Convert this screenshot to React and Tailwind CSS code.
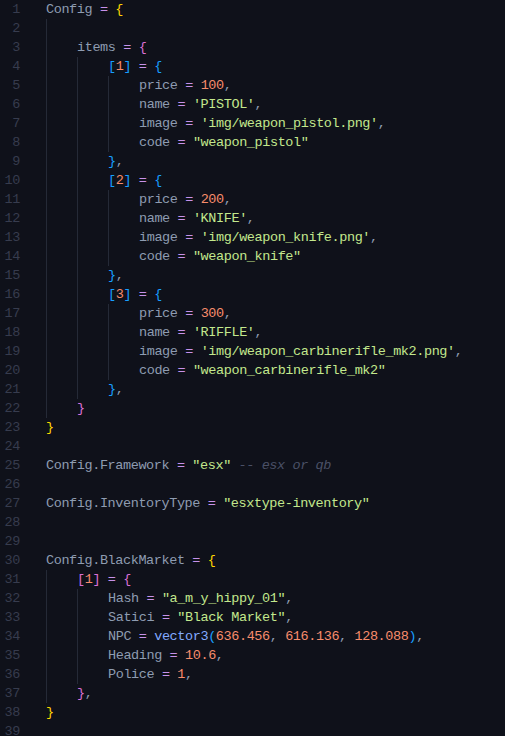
import React from 'react';

// token colours
const C = {
  id: 'text-[#8e9cb1]',
  op: 'text-[#c792ea]',
  num: 'text-[#f78c6c]',
  str: 'text-[#c3e88d]',
  fn: 'text-[#82aaff]',
  b1: 'text-[#ffd700]',
  b2: 'text-[#da70d6]',
  b3: 'text-[#179fff]',
  cm: 'text-[#4a5066] italic',
};

const eq = [' = ', 'op'];

// [indentLevel, tokens]
const lines = [
  [0, [['Config', 'id'], eq, ['{', 'b1']]],
  [1, []],
  [1, [['items', 'id'], eq, ['{', 'b2']]],
  [2, [['[', 'b3'], ['1', 'num'], [']', 'b3'], eq, ['{', 'b3']]],
  [3, [['price', 'id'], eq, ['100', 'num'], [',', 'id']]],
  [3, [['name', 'id'], eq, ["'PISTOL'", 'str'], [',', 'id']]],
  [3, [['image', 'id'], eq, ["'img/weapon_pistol.png'", 'str'], [',', 'id']]],
  [3, [['code', 'id'], eq, ['"weapon_pistol"', 'str']]],
  [2, [['}', 'b3'], [',', 'id']]],
  [2, [['[', 'b3'], ['2', 'num'], [']', 'b3'], eq, ['{', 'b3']]],
  [3, [['price', 'id'], eq, ['200', 'num'], [',', 'id']]],
  [3, [['name', 'id'], eq, ["'KNIFE'", 'str'], [',', 'id']]],
  [3, [['image', 'id'], eq, ["'img/weapon_knife.png'", 'str'], [',', 'id']]],
  [3, [['code', 'id'], eq, ['"weapon_knife"', 'str']]],
  [2, [['}', 'b3'], [',', 'id']]],
  [2, [['[', 'b3'], ['3', 'num'], [']', 'b3'], eq, ['{', 'b3']]],
  [3, [['price', 'id'], eq, ['300', 'num'], [',', 'id']]],
  [3, [['name', 'id'], eq, ["'RIFFLE'", 'str'], [',', 'id']]],
  [3, [['image', 'id'], eq, ["'img/weapon_carbinerifle_mk2.png'", 'str'], [',', 'id']]],
  [3, [['code', 'id'], eq, ['"weapon_carbinerifle_mk2"', 'str']]],
  [2, [['}', 'b3'], [',', 'id']]],
  [1, [['}', 'b2']]],
  [0, [['}', 'b1']]],
  [0, []],
  [0, [['Config.Framework', 'id'], eq, ['"esx"', 'str'], [' -- esx or qb', 'cm']]],
  [0, []],
  [0, [['Config.InventoryType', 'id'], eq, ['"esxtype-inventory"', 'str']]],
  [0, []],
  [0, []],
  [0, [['Config.BlackMarket', 'id'], eq, ['{', 'b1']]],
  [1, [['[', 'b2'], ['1', 'num'], [']', 'b2'], eq, ['{', 'b2']]],
  [2, [['Hash', 'id'], eq, ['"a_m_y_hippy_01"', 'str'], [',', 'id']]],
  [2, [['Satici', 'id'], eq, ['"Black Market"', 'str'], [',', 'id']]],
  [2, [['NPC', 'id'], eq, ['vector3', 'fn'], ['(', 'b3'], ['636.456', 'num'], [', ', 'id'], ['616.136', 'num'], [', ', 'id'], ['128.088', 'num'], [')', 'b3'], [',', 'id']]],
  [2, [['Heading', 'id'], eq, ['10.6', 'num'], [',', 'id']]],
  [2, [['Police', 'id'], eq, ['1', 'num'], [',', 'id']]],
  [1, [['}', 'b2'], [',', 'id']]],
  [0, [['}', 'b1']]],
  [0, []],
  [0, []],
];

const CodeLine = ({ num, level, tokens }) => (
  <div className="flex h-[19px] items-stretch">
    <div className="w-[20px] shrink-0 text-right text-[#373c4e] leading-[19px]">{num}</div>
    <div className="w-[26px] shrink-0" />
    {Array.from({ length: level }).map((_, i) => (
      <span key={i} className="w-[31px] shrink-0 border-l border-[#252a37]" />
    ))}
    <div className="whitespace-pre leading-[19px]">
      {tokens.map(([text, kind], i) => (
        <span key={i} className={C[kind]}>
          {text}
        </span>
      ))}
    </div>
  </div>
);

export default function App() {
  return (
    <div
      className="h-screen w-full overflow-hidden bg-[#0f111a] text-[13.5px] tracking-[-0.4px]"
      style={{ fontFamily: '"Liberation Mono", "DejaVu Sans Mono", monospace' }}
    >
      {lines.map(([level, tokens], i) => (
        <CodeLine key={i} num={i + 1} level={level} tokens={tokens} />
      ))}
    </div>
  );
}
